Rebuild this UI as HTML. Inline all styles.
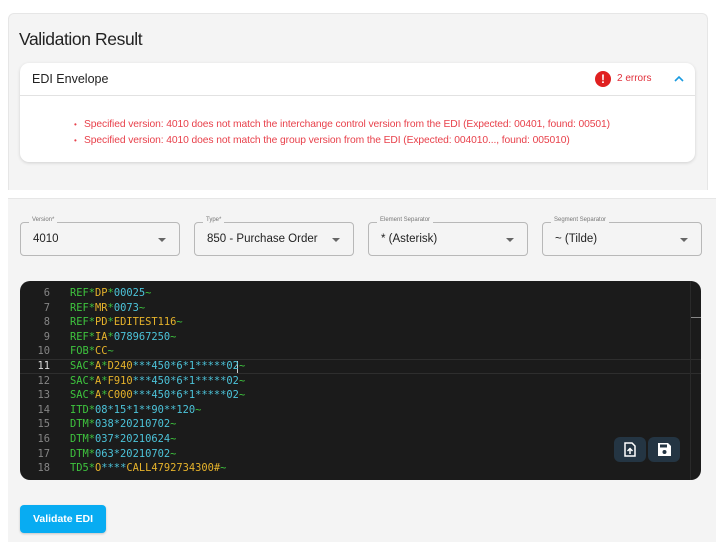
<!DOCTYPE html>
<html><head><meta charset="utf-8"><style>
*{box-sizing:border-box;margin:0;padding:0}
body{width:716px;height:546px;background:#fff;font-family:"Liberation Sans",sans-serif;position:relative;overflow:hidden}
.p1{position:absolute;left:8px;top:13px;width:700px;height:177px;background:#f4f4f4;border-radius:6px 6px 0 0;border:1px solid #e6e6e6;border-bottom:none}
.p2{position:absolute;left:8px;top:198px;width:708px;height:344px;background:#f4f4f4;border-top:1px solid #e6e6e6}
h1{position:absolute;left:19px;top:29px;font-size:17.5px;font-weight:normal;color:#222;letter-spacing:-0.4px}
.card{position:absolute;left:20px;top:63px;width:675px;height:99px;background:#fff;border-radius:9px;box-shadow:0 1px 3px rgba(0,0,0,.15)}
.card .hd{height:33px;border-bottom:1px solid #e2e2e2;position:relative}
.card .hd span.t{position:absolute;left:12px;top:9px;font-size:12.5px;color:#222}
.err{position:absolute;left:575px;top:8px;width:16px;height:16px;border-radius:50%;background:#e02020;color:#fff;font-weight:bold;font-size:12px;text-align:center;line-height:16px}
.errt{position:absolute;left:597px;top:10px;font-size:10px;color:#e02f3a}
.chev{position:absolute;left:654px;top:12px}
ul{position:absolute;left:64px;top:54px;list-style:none;font-size:10.3px;color:#e8414b;line-height:15.5px;letter-spacing:-0.1px}
ul li::before{content:"•";position:absolute;left:-10px;font-size:8px}
ul li{position:relative;white-space:nowrap}
.sel{position:absolute;top:222px;width:160px;height:34px;border:1px solid #b8b8b8;border-radius:4px;background:#f4f4f4}
.sel .lb{position:absolute;left:8px;top:-6px;font-size:6px;color:#777;background:#f4f4f4;padding:0 3px}
.sel .v{position:absolute;left:12px;top:10px;font-size:11.5px;color:#222}
.sel .ar{position:absolute;right:13px;top:15px;width:0;height:0;border-left:4px solid transparent;border-right:4px solid transparent;border-top:4px solid #666}
.ed{position:absolute;left:20px;top:281px;width:681px;height:199px;background:#1b1b1b;border-radius:10px;overflow:hidden;font-family:"DejaVu Sans Mono","Liberation Mono",monospace;font-size:10.4px}
.ln{position:absolute;left:0;width:30px;text-align:right;color:#858585}
.cd{position:absolute;left:50px;white-space:pre}
.hl{position:absolute;left:0;top:78px;width:681px;height:15px;border-top:1px solid #2e2e2e;border-bottom:1px solid #2e2e2e}
.g{color:#3ec43e}.o{color:#e5b22b}.c{color:#4cc3d9}
.btn{position:absolute;top:437px;width:32px;height:25px;background:#243543;border-radius:6px}
.vb{position:absolute;left:20px;top:505px;width:86px;height:28px;background:#08acf2;border-radius:4px;color:#fff;font-size:10.5px;font-weight:bold;text-align:center;line-height:28px;box-shadow:0 1px 2px rgba(0,0,0,.2)}
</style></head><body>
<div class="p1"></div>
<div class="p2"></div>
<h1>Validation Result</h1>
<div class="card"><div class="hd"><span class="t">EDI Envelope</span><div class="err">!</div><span class="errt">2 errors</span>
<svg class="chev" width="10" height="8" viewBox="0 0 10 8"><path d="M1 6 L5 2 L9 6" stroke="#1a9be0" stroke-width="1.6" fill="none"/></svg></div>
<ul><li>Specified version: 4010 does not match the interchange control version from the EDI (Expected: 00401, found: 00501)</li>
<li>Specified version: 4010 does not match the group version from the EDI (Expected: 004010..., found: 005010)</li></ul></div>
<div class="sel" style="left:20px"><span class="lb">Version*</span><span class="v">4010</span><span class="ar"></span></div>
<div class="sel" style="left:194px"><span class="lb">Type*</span><span class="v">850 - Purchase Order</span><span class="ar"></span></div>
<div class="sel" style="left:368px"><span class="lb">Element Separator</span><span class="v">* (Asterisk)</span><span class="ar"></span></div>
<div class="sel" style="left:542px"><span class="lb">Segment Separator</span><span class="v">~ (Tilde)</span><span class="ar"></span></div>
<div class="ed">
<div class="hl"></div>
<div style="position:absolute;left:670px;top:36px;width:11px;height:1px;background:#888"></div>
<div style="position:absolute;left:670px;top:0;width:1px;height:199px;background:#2a2a2a"></div>
<div style="position:absolute;left:217px;top:80px;width:1px;height:12px;background:#ccc"></div>
<div class="ln" style="top:5px;line-height:14.6px">6<br>7<br>8<br>9<br>10<br><span style="color:#ddd">11</span><br>12<br>13<br>14<br>15<br>16<br>17<br>18</div>
<div class="cd" style="top:5px;line-height:14.6px"><span class="g">REF*</span><span class="o">DP</span><span class="g">*</span><span class="c">00025</span><span class="g">~</span>
<span class="g">REF*</span><span class="o">MR</span><span class="g">*</span><span class="c">0073</span><span class="g">~</span>
<span class="g">REF*</span><span class="o">PD</span><span class="g">*</span><span class="o">EDITEST116</span><span class="g">~</span>
<span class="g">REF*</span><span class="o">IA</span><span class="g">*</span><span class="c">078967250</span><span class="g">~</span>
<span class="g">FOB*</span><span class="o">CC</span><span class="g">~</span>
<span class="g">SAC*</span><span class="o">A</span><span class="g">*</span><span class="o">D240</span><span class="c">***450*6*1*****02</span><span class="g">~</span>
<span class="g">SAC*</span><span class="o">A</span><span class="g">*</span><span class="o">F910</span><span class="c">***450*6*1*****02</span><span class="g">~</span>
<span class="g">SAC*</span><span class="o">A</span><span class="g">*</span><span class="o">C000</span><span class="c">***450*6*1*****02</span><span class="g">~</span>
<span class="g">ITD*</span><span class="c">08*15*1**90**120</span><span class="g">~</span>
<span class="g">DTM*</span><span class="c">038*20210702</span><span class="g">~</span>
<span class="g">DTM*</span><span class="c">037*20210624</span><span class="g">~</span>
<span class="g">DTM*</span><span class="c">063*20210702</span><span class="g">~</span>
<span class="g">TD5*</span><span class="o">O</span><span class="c">****</span><span class="o">CALL4792734300#</span><span class="g">~</span></div>
</div>
<div class="btn" style="left:614px"><svg width="32" height="25" viewBox="0 0 32 25"><path d="M11 6 H18 L21 9 V19 H11 Z" fill="none" stroke="#fff" stroke-width="1.5"/><path d="M16 17 V12 M13.5 14 L16 11.5 L18.5 14" stroke="#fff" stroke-width="1.5" fill="none"/></svg></div>
<div class="btn" style="left:648px"><svg width="32" height="25" viewBox="0 0 32 25"><path d="M10 6 H20 L23 9 V19 H10 Z" fill="#fff"/><rect x="12" y="7.5" width="7" height="3" fill="#243543"/><circle cx="16.5" cy="15" r="2" fill="#243543"/></svg></div>
<div class="vb">Validate EDI</div>
</body></html>
